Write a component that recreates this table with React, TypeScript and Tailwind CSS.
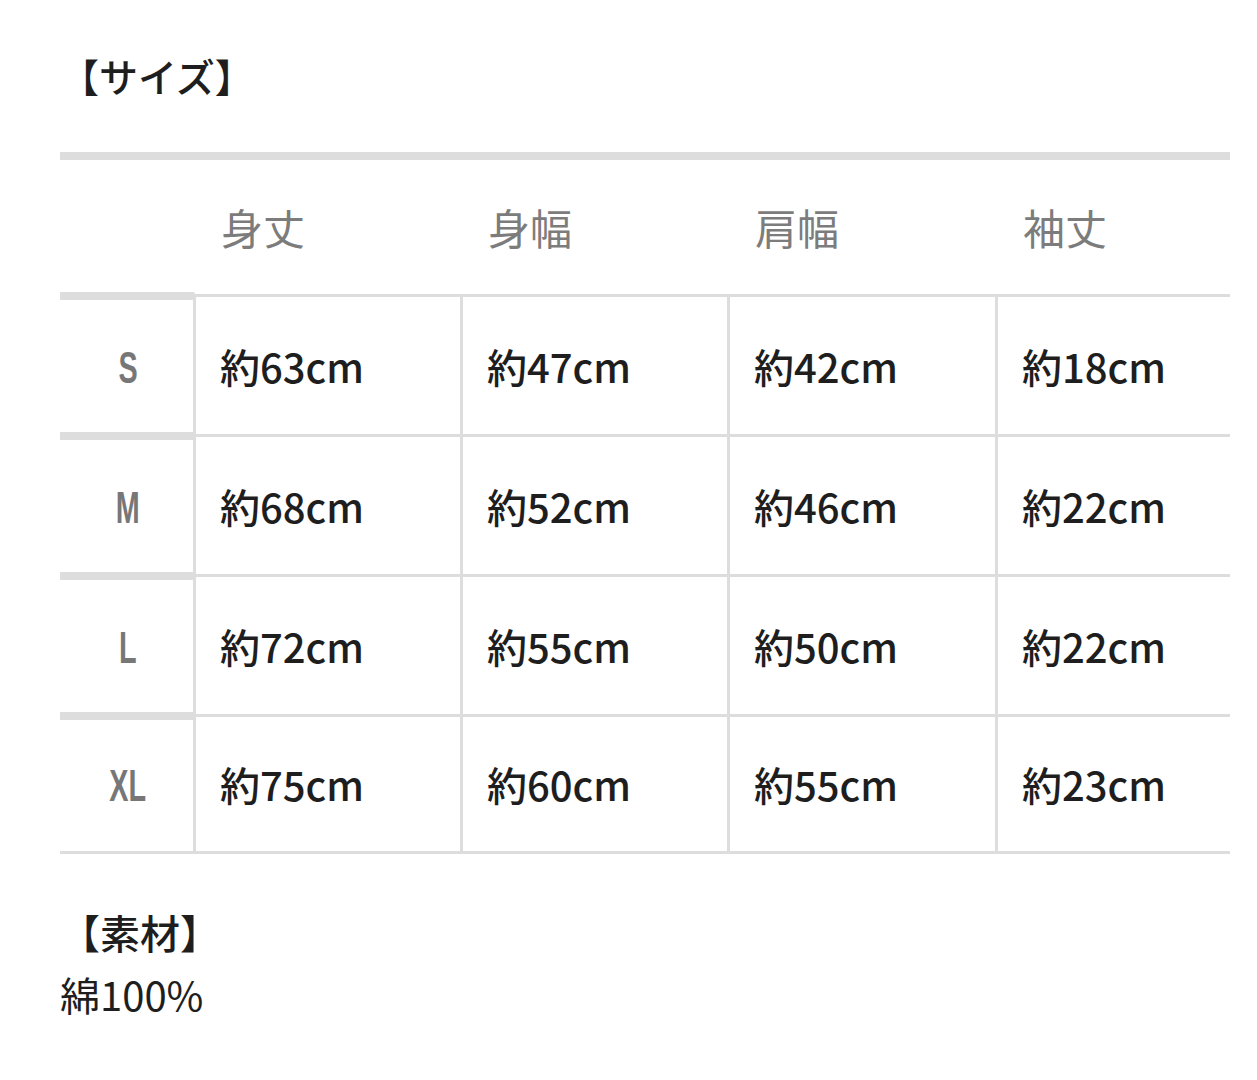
const cols = ["身丈", "身幅", "肩幅", "袖丈"];

const rows: { size: string; values: string[] }[] = [
  { size: "S", values: ["約63cm", "約47cm", "約42cm", "約18cm"] },
  { size: "M", values: ["約68cm", "約52cm", "約46cm", "約22cm"] },
  { size: "L", values: ["約72cm", "約55cm", "約50cm", "約22cm"] },
  { size: "XL", values: ["約75cm", "約60cm", "約55cm", "約23cm"] },
];

// column widths incl. the 3px left border of each data cell
const widths = ["w-[267px]", "w-[267px]", "w-[268px]", "w-[235px]"];

export default function App() {
  return (
    <div
      className="min-h-screen bg-white pl-[60px] text-[#1e1e1e]"
      style={{ fontFamily: '"Noto Sans CJK JP", "Noto Sans", sans-serif' }}
    >
      <h2 className="pt-[46px] text-[39px] font-medium leading-[58px]">
        【サイズ】
      </h2>

      <div className="mt-[48px] w-[1170px]">
        <div className="h-[8px] bg-[#dddddd]" />

        {/* header */}
        <div className="flex h-[134px]">
          <div className="w-[133px]" />
          {cols.map((c, i) => (
            <div
              key={c}
              className={`${widths[i]} flex items-center pl-[28px] text-[42px] leading-none text-[#7c7c7c]`}
            >
              {c}
            </div>
          ))}
        </div>

        {rows.map((r, ri) => {
          const last = ri === rows.length - 1;
          return (
            <div
              key={r.size}
              className={`flex ${last ? "border-b-[3px] border-[#dddddd]" : ""}`}
            >
              <div className="flex w-[133px] flex-col">
                <div className="-mt-[2px] mr-[-2px] h-[8px] rounded-r-[2px] bg-[#dddddd]" />
                <div className="flex flex-1 items-center justify-center pl-[3px]">
                  <span
                    className="inline-block scale-x-[0.64] text-[45px] font-bold leading-none text-[#777777]"
                    style={{ fontFamily: '"Liberation Sans", sans-serif' }}
                  >
                    {r.size}
                  </span>
                </div>
              </div>
              {r.values.map((v, i) => (
                <div
                  key={i}
                  className={`${widths[i]} flex ${last ? "h-[137px]" : "h-[140px]"} items-center border-l-[3px] border-t-[3px] border-[#dddddd] pl-[24px] text-[40px] font-medium leading-none`}
                >
                  {v}
                </div>
              ))}
            </div>
          );
        })}
      </div>

      <div className="mt-[48px] text-[40px] font-medium leading-[60px]">【素材】</div>
      <div className="mt-[2px] text-[40px] leading-[60px]">綿100%</div>
    </div>
  );
}
